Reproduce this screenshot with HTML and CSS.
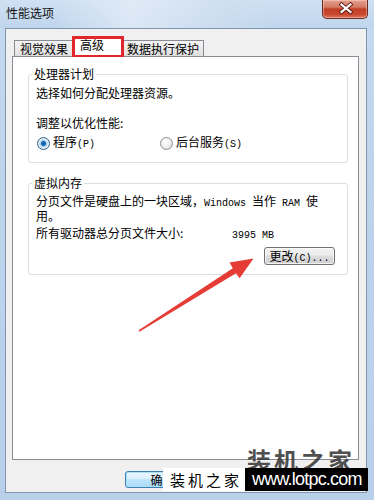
FILE: index.html
```html
<!DOCTYPE html>
<html lang="zh-CN">
<head>
<meta charset="utf-8">
<title>性能选项</title>
<link rel="stylesheet" href="styles.css">
</head>
<body>
<div class="window">
  <div class="titlebar">
    <span class="title">性能选项</span>
    <div class="close">
      <svg width="46" height="19" viewBox="0 0 46 19">
        <path d="M18.5 5.5 L27.5 13 M27.5 5.5 L18.5 13" stroke="#5a1a12" stroke-width="4" stroke-linecap="square"/>
        <path d="M18.5 5.5 L27.5 13 M27.5 5.5 L18.5 13" stroke="#ffffff" stroke-width="2.2" stroke-linecap="square"/>
      </svg>
    </div>
  </div>
  <div class="client">
    <div class="tabs">
      <div class="tab t1">视觉效果</div>
      <div class="tab t2 active">高级</div>
      <div class="tab t3">数据执行保护</div>
    </div>
    <div class="panel">
      <fieldset class="group g1">
        <legend>处理器计划</legend>
        <div class="line first">选择如何分配处理器资源。</div>
        <div class="line gap16">调整以优化性能:</div>
        <div class="radios">
          <span class="radio-item"><span class="radio on"></span><span>程序<span class="en">(P)</span></span></span>
          <span class="radio-item r2"><span class="radio"></span><span>后台服务<span class="en">(S)</span></span></span>
        </div>
      </fieldset>
      <fieldset class="group g2">
        <legend>虚拟内存</legend>
        <div class="para">分页文件是硬盘上的一块区域，<span class="en">Windows </span>当作<span class="en"> RAM </span>使<br>用。</div>
        <div class="line size-row"><span class="size-label">所有驱动器总分页文件大小:</span><span class="en">3995 MB</span></div>
        <div class="btn-row"><div class="btn">更改<span class="en">(C)...</span></div></div>
      </fieldset>
    </div>
    <div class="footer">
      <div class="btn ok">确定</div>
    </div>
  </div>
  <svg class="arrow" width="374" height="500" viewBox="0 0 374 500">
    <polygon points="138.6,330.3 232.8,268.2 229.6,262.6 253.5,258.5 239.6,278.3 236,273.2 139.4,331.7" fill="#e53c36"/>
  </svg>
  <div class="wm-big">装机之家</div>
  <div class="wm-bar">
    <span class="wm-white">装机之家</span><span class="wm-black">www.lotpc.com</span>
  </div>
</div>
</body>
</html>
```

FILE: styles.css
```css
* { box-sizing: border-box; }
html, body { margin: 0; padding: 0; }
body {
  font-family: "Noto Sans CJK SC", "Liberation Sans", sans-serif;
  font-size: 12px;
  color: #000;
  background: #fff;
}
.window {
  position: relative;
  width: 374px;
  height: 500px;
  overflow: hidden;
  background: linear-gradient(180deg, #c6daef 0%, #bcd3ec 40%, #b8d0ea 100%);
}
.titlebar {
  height: 28px;
  display: flex;
  justify-content: space-between;
  align-items: flex-start;
  background:
    linear-gradient(90deg, rgba(255,255,255,0) 15%, rgba(230,238,248,0.7) 35%, rgba(210,224,240,0.5) 60%, rgba(255,255,255,0) 75%),
    linear-gradient(180deg, #cfe0f2 0%, #c0d6ed 100%);
}
.title {
  padding: 6px 0 0 6px;
  line-height: 14px;
  font-size: 12px;
  color: #111;
}
.close {
  width: 46px;
  height: 19px;
  margin-right: 6px;
  border: 1px solid #6b2a20;
  border-top: none;
  border-radius: 0 0 5px 5px;
  background: linear-gradient(180deg, #e6a090 0%, #d47a64 40%, #c23e26 50%, #c9492e 80%, #dc765e 100%);
  box-shadow: inset 0 0 0 1px rgba(255,220,210,0.45);
}
.close svg { display: block; margin-top: -1px; }
.client {
  margin-left: 5px;
  width: 362px;
  height: 465px;
  border: 1px solid #8196ad;
  background: #f0f0f0;
  padding: 7px 0 0 6px;
}
.tabs {
  display: flex;
  align-items: flex-end;
  height: 20px;
  padding-left: 2px;
  position: relative;
  z-index: 2;
}
.tab {
  height: 16px;
  line-height: 15px;
  border: 1px solid #898c95;
  border-bottom: none;
  background: linear-gradient(180deg, #f3f3f3 0%, #ebebeb 50%, #dedede 100%);
  padding-left: 5px;
  white-space: nowrap;
}
.t1 { width: 58px; border-right: none; }
.t3 { width: 80px; padding-left: 3px; border-left: none; }
.t2.active {
  width: 52px;
  height: 21px;
  margin-bottom: -1px;
  background: #fff;
  padding-left: 7px;
  line-height: 16px;
  box-shadow: inset 0 0 0 2px #e3262b;
  border-color: #e3262b;
}
.panel {
  width: 347px;
  height: 404px;
  border: 1px solid #898c95;
  background: #fff;
  padding-top: 10px;
  position: relative;
  z-index: 1;
}
.group {
  margin: 0 0 0 15px;
  width: 320px;
  border: 1px solid #d5dfe5;
  border-radius: 3px;
  padding: 0 12px 12px 7px;
  min-width: 0;
}
.group legend {
  padding: 0 2px;
  margin-left: -4px;
  line-height: 14px;
  font-size: 12px;
}
.line { line-height: 14px; height: 14px; white-space: nowrap; }
.first { margin-top: 5px; }
.gap16 { margin-top: 16px; }
.radios {
  margin-top: 6px;
  height: 14px;
  display: flex;
  align-items: center;
  line-height: 14px;
}
.radio-item { display: flex; align-items: center; gap: 3px; margin-left: 1px; }
.radio-item.r2 { margin-left: 65px; }
.radio {
  width: 13px;
  height: 13px;
  border-radius: 50%;
  border: 1px solid #8e8f8f;
  background: radial-gradient(circle at 40% 35%, #ffffff 0%, #eeeeee 50%, #d6d6d6 100%);
}
.radio.on {
  border-color: #2c628b;
  background: radial-gradient(circle at 50% 50%, #0e5db0 0%, #1c6fb8 28%, #9bc4e6 34%, #e8f2fb 60%, #c8d8e6 100%);
}
.en {
  font-family: "Liberation Mono", monospace;
  font-size: 10px;
}
.g2 { margin-top: 13px; padding-bottom: 9px; }
.para {
  margin-top: 5px;
  line-height: 12px;
  white-space: nowrap;
}
.size-row { margin-top: 4px; }
.size-label { display: inline-block; width: 196px; }
.btn-row { margin-top: 7px; display: flex; justify-content: flex-end; }
.btn {
  width: 71px;
  height: 18px;
  border: 1px solid #707070;
  border-radius: 3px;
  background: linear-gradient(180deg, #f2f2f2 0%, #ebebeb 45%, #dddddd 50%, #cfcfcf 100%);
  box-shadow: inset 0 0 0 1px rgba(255,255,255,0.7);
  text-align: center;
  line-height: 16px;
  font-size: 12px;
}
.footer { padding: 11px 0 0 113px; }
.btn.ok {
  width: 75px;
  height: 17px;
  border-color: #3c7fb1;
  background: linear-gradient(180deg, #eaf6fd 0%, #d9f0fc 45%, #bee6fd 50%, #a7d9f5 100%);
  box-shadow: inset 0 0 0 1px #aee0f8;
  line-height: 15px;
}
.arrow {
  position: absolute;
  left: 0;
  top: 0;
  pointer-events: none;
  z-index: 5;
}
.wm-big {
  position: absolute;
  left: 247px;
  top: 448px;
  height: 20px;
  overflow: hidden;
  font-size: 24px;
  line-height: 24px;
  font-weight: bold;
  letter-spacing: 3px;
  color: rgba(55,55,55,0.9);
  z-index: 6;
}
.wm-bar {
  position: absolute;
  left: 163px;
  top: 468px;
  height: 23px;
  display: flex;
  z-index: 7;
}
.wm-white {
  width: 82px;
  background: #fff;
  color: #000;
  font-size: 15px;
  line-height: 23px;
  letter-spacing: 3px;
  padding-left: 7px;
  white-space: nowrap;
}
.wm-black {
  width: 123px;
  background: #000;
  color: #fff;
  font-family: "Liberation Sans", sans-serif;
  font-size: 18px;
  line-height: 23px;
  letter-spacing: -0.8px;
  padding-left: 7px;
  white-space: nowrap;
}
```
